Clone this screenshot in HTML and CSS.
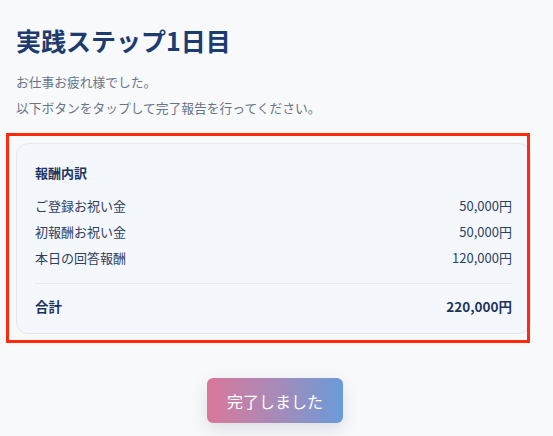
FILE: index.html
```html
<!DOCTYPE html>
<html lang="ja">
<head>
  <meta charset="utf-8">
  <title>実践ステップ1日目</title>
  <link rel="stylesheet" href="styles.css">
</head>
<body>
<div class="page">
  <h1 class="title">実践ステップ1日目</h1>
  <p class="lead">お仕事お疲れ様でした。<br>以下ボタンをタップして完了報告を行ってください。</p>

  <div class="card">
    <div class="card-title">報酬内訳</div>
    <div class="row"><span>ご登録お祝い金</span><span>50,000円</span></div>
    <div class="row"><span>初報酬お祝い金</span><span>50,000円</span></div>
    <div class="row"><span>本日の回答報酬</span><span>120,000円</span></div>
    <div class="row total"><span>合計</span><span>220,000円</span></div>
  </div>

  <div class="actions">
    <button class="done-btn">完了しました</button>
  </div>

  <div class="highlight"></div>
</div>
</body>
</html>
```

FILE: styles.css
```css
body {
  margin: 0;
  background: #f8f9fb;
  font-family: "Noto Sans CJK JP", "Noto Sans", sans-serif;
}
.page {
  position: relative;
  padding: 23px 0 0 16px;
  height: 413px;
  overflow: hidden;
}
.title {
  margin: 0;
  font-size: 25px;
  line-height: 34px;
  font-weight: 700;
  color: #1d3b6e;
}
.lead {
  margin: 12px 0 0;
  font-size: 12.75px;
  line-height: 26px;
  color: #687489;
}
.card {
  margin-top: 22px;
  width: 477px;
  padding: 20px 18px 14px 18px;
  background: #f4f8fc;
  border: 1px solid #e3e8ef;
  border-radius: 12px;
}
.card-title {
  font-size: 13px;
  line-height: 18px;
  font-weight: 700;
  color: #1d3461;
  margin-bottom: 11px;
}
.row {
  display: flex;
  justify-content: space-between;
  font-size: 13px;
  line-height: 26px;
  color: #2e405f;
}
.row.total {
  margin-top: 12px;
  padding-top: 9px;
  border-top: 1px solid #e3e8ef;
  font-size: 13.5px;
  font-weight: 700;
  color: #1d3461;
}
.actions {
  display: flex;
  justify-content: center;
  margin-top: 44px;
  margin-left: -19px;
}
.done-btn {
  width: 136px;
  height: 45px;
  border: none;
  border-radius: 6px;
  background: linear-gradient(90deg, #d9789a 0%, #a88ab8 50%, #6a9bd8 100%);
  color: #fff;
  font-family: inherit;
  font-size: 16px;
  box-shadow: 0 6px 16px rgba(60, 70, 100, 0.15);
}
.highlight {
  position: absolute;
  left: 6px;
  top: 133px;
  width: 518px;
  height: 204px;
  border: 3.5px solid #ff2a0c;
}
```
